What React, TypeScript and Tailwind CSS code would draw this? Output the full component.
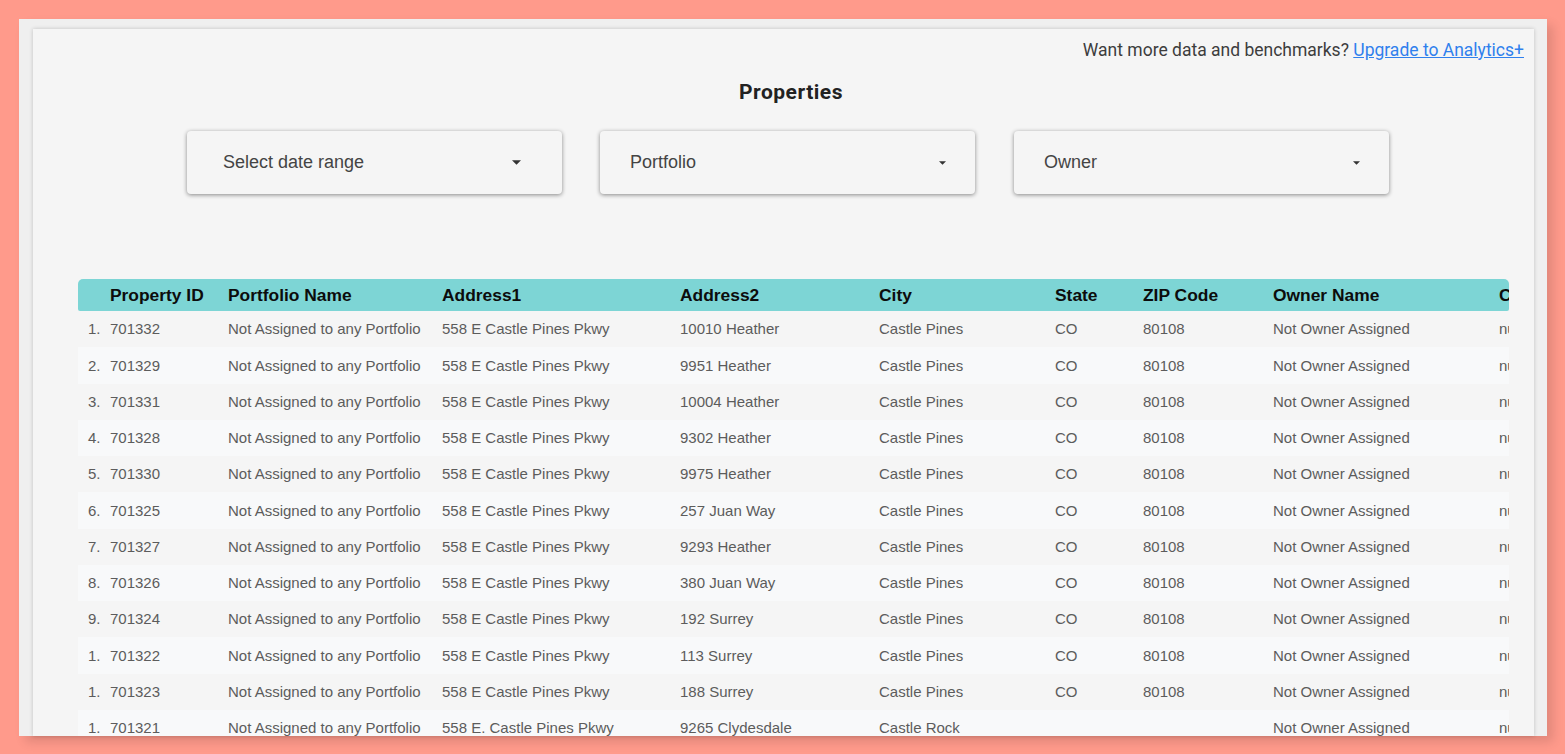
const rows = [
  ["1.", "701332", "558 E Castle Pines Pkwy", "10010 Heather", "Castle Pines", "CO", "80108"],
  ["2.", "701329", "558 E Castle Pines Pkwy", "9951 Heather", "Castle Pines", "CO", "80108"],
  ["3.", "701331", "558 E Castle Pines Pkwy", "10004 Heather", "Castle Pines", "CO", "80108"],
  ["4.", "701328", "558 E Castle Pines Pkwy", "9302 Heather", "Castle Pines", "CO", "80108"],
  ["5.", "701330", "558 E Castle Pines Pkwy", "9975 Heather", "Castle Pines", "CO", "80108"],
  ["6.", "701325", "558 E Castle Pines Pkwy", "257 Juan Way", "Castle Pines", "CO", "80108"],
  ["7.", "701327", "558 E Castle Pines Pkwy", "9293 Heather", "Castle Pines", "CO", "80108"],
  ["8.", "701326", "558 E Castle Pines Pkwy", "380 Juan Way", "Castle Pines", "CO", "80108"],
  ["9.", "701324", "558 E Castle Pines Pkwy", "192 Surrey", "Castle Pines", "CO", "80108"],
  ["1.", "701322", "558 E Castle Pines Pkwy", "113 Surrey", "Castle Pines", "CO", "80108"],
  ["1.", "701323", "558 E Castle Pines Pkwy", "188 Surrey", "Castle Pines", "CO", "80108"],
  ["1.", "701321", "558 E. Castle Pines Pkwy", "9265 Clydesdale", "Castle Rock", "", ""],
];

const gridCols = "grid grid-cols-[32px_118px_214px_238px_199px_176px_88px_130px_226px_40px]";

const Caret = ({ big }: { big?: boolean }) => (
  <svg viewBox="0 0 10 5" className={big ? "w-[9px] h-[5px]" : "w-[7px] h-[4px]"}>
    <path d="M0 0h10L5 5z" fill="#333" />
  </svg>
);

const Select = ({ label, big, pad }: { label: string; big?: boolean; pad: string }) => (
  <div className={`flex items-center justify-between w-[375px] h-[63px] rounded bg-[#f5f5f5] shadow-[0_1px_4px_rgba(0,0,0,0.45)] ${pad}`}>
    <span className="text-[18px] leading-[24px] -mt-[1px] text-[#444]">{label}</span>
    <Caret big={big} />
  </div>
);

export default function App() {
  return (
    <div className="h-[754px] bg-[#ff9a8b] pt-[19px] pl-[19px] pr-[18px] pb-[18px] overflow-hidden font-['Liberation_Sans',sans-serif]">
      <div className="h-full bg-[#efefef] pt-[10px] pl-[14px] pr-[13px] shadow-[6px_6px_10px_rgba(0,0,0,0.12)]">
        <div className="h-full bg-[#f5f5f5] overflow-hidden shadow-[0_0_4px_rgba(0,0,0,0.2)]">
          <div className="flex justify-end pr-[10px] pt-[9px] text-[17.5px] leading-[24px] text-[#3d3d3d] font-['Roboto',sans-serif]">
            <span>
              Want more data and benchmarks?{" "}
              <a href="#" className="text-[#2f80ed] underline">Upgrade to Analytics+</a>
            </span>
          </div>
          <h1 className="mt-[16px] pl-[15px] text-center text-[21px] leading-[28px] font-bold tracking-[0.5px] text-[#222] font-['Roboto',sans-serif]">
            Properties
          </h1>
          <div className="flex gap-[38px] ml-[154px] mt-[25px]">
            <Select label="Select date range" big pad="pl-[36px] pr-[41px]" />
            <Select label="Portfolio" pad="pl-[30px] pr-[29px]" />
            <div className="ml-[1px]">
              <Select label="Owner" pad="pl-[30px] pr-[29px]" />
            </div>
          </div>
          <div className="mt-[85px] ml-[45px] w-[1431px] overflow-hidden rounded-t-[5px]">
            <div className={`${gridCols} h-[32px] items-center rounded-b-[2px] bg-[#7dd5d5] text-[17.4px] font-bold text-[#0c0c0c]`}>
              <span />
              <span>Property ID</span>
              <span>Portfolio Name</span>
              <span>Address1</span>
              <span>Address2</span>
              <span>City</span>
              <span>State</span>
              <span>ZIP Code</span>
              <span>Owner Name</span>
              <span>City</span>
            </div>
            {rows.map((r, i) => (
              <div
                key={r[1]}
                className={`${gridCols} h-[36.25px] items-center pt-[1px] text-[15px] text-[#5c5c5c] ${i % 2 ? "bg-[#f8f9fa]" : "bg-[#f5f5f5]"}`}
              >
                <span className="pl-[10px]">{r[0]}</span>
                <span>{r[1]}</span>
                <span>Not Assigned to any Portfolio</span>
                <span>{r[2]}</span>
                <span>{r[3]}</span>
                <span>{r[4]}</span>
                <span>{r[5]}</span>
                <span>{r[6]}</span>
                <span>Not Owner Assigned</span>
                <span>null</span>
              </div>
            ))}
          </div>
        </div>
      </div>
    </div>
  );
}
